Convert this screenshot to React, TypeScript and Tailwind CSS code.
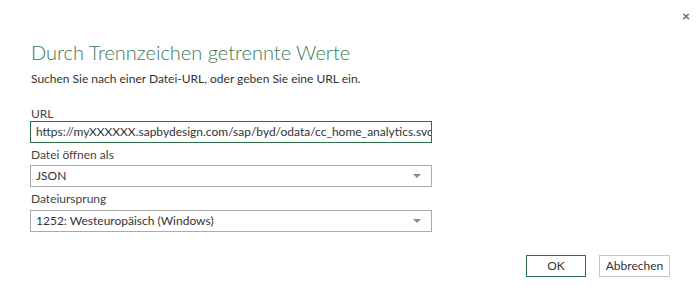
import React from "react";

const font = { fontFamily: '"Segoe UI", Lato, "Open Sans", sans-serif' };

const Chevron = () => (
  <svg width="8" height="5" viewBox="0 0 8 5" className="text-[#8a8a8a]">
    <path d="M0 0 L8 0 L4 4 Z" fill="currentColor" />
  </svg>
);

const Select = ({ value }: { value: string }) => (
  <div className="flex items-center justify-between h-[22px] w-[402px] border border-[#ababab] bg-white pl-[5px] pr-[10px]">
    <span className="text-[12px] text-[#333]">{value}</span>
    <Chevron />
  </div>
);

export default function App() {
  return (
    <div className="relative w-[700px] h-[308px] bg-white text-[#444]" style={font}>
      <button className="absolute right-[10px] top-[5px] text-[14px] font-bold text-[#666]">×</button>

      <div className="pl-[31px] pt-[38px]">
        <h1 className="text-[20px] font-light text-[#3d7a57] leading-[28px]">
          Durch Trennzeichen getrennte Werte
        </h1>
        <p className="mt-[5px] text-[12px] leading-[16px] text-[#333]">
          Suchen Sie nach einer Datei-URL, oder geben Sie eine URL ein.
        </p>

        <div className="mt-[19px] text-[12px] leading-[15px] text-[#444]">URL</div>
        <div className="-ml-[1px] h-[22px] w-[402px] border border-[#2e6e48] overflow-hidden whitespace-nowrap pl-[5px] text-[12px] leading-[20px] text-[#333]">
          https://myXXXXXX.sapbydesign.com/sap/byd/odata/cc_home_analytics.svc
        </div>

        <div className="mt-[4px] text-[12px] leading-[15px] text-[#444]">Datei öffnen als</div>
        <div className="mt-[3px] -ml-[1px]">
          <Select value="JSON" />
        </div>

        <div className="mt-[4px] text-[12px] leading-[15px] text-[#444]">Dateiursprung</div>
        <div className="mt-[4px] -ml-[1px]">
          <Select value="1252: Westeuropäisch (Windows)" />
        </div>
      </div>

      <div className="flex justify-end gap-[13px] pr-[30px] mt-[23px]">
        <button className="w-[60px] h-[22px] border border-[#2e6e48] bg-white text-[12px] text-[#333]">OK</button>
        <button className="w-[71px] h-[22px] border border-[#c6c6c6] bg-white text-[12px] text-[#333]">Abbrechen</button>
      </div>
    </div>
  );
}
